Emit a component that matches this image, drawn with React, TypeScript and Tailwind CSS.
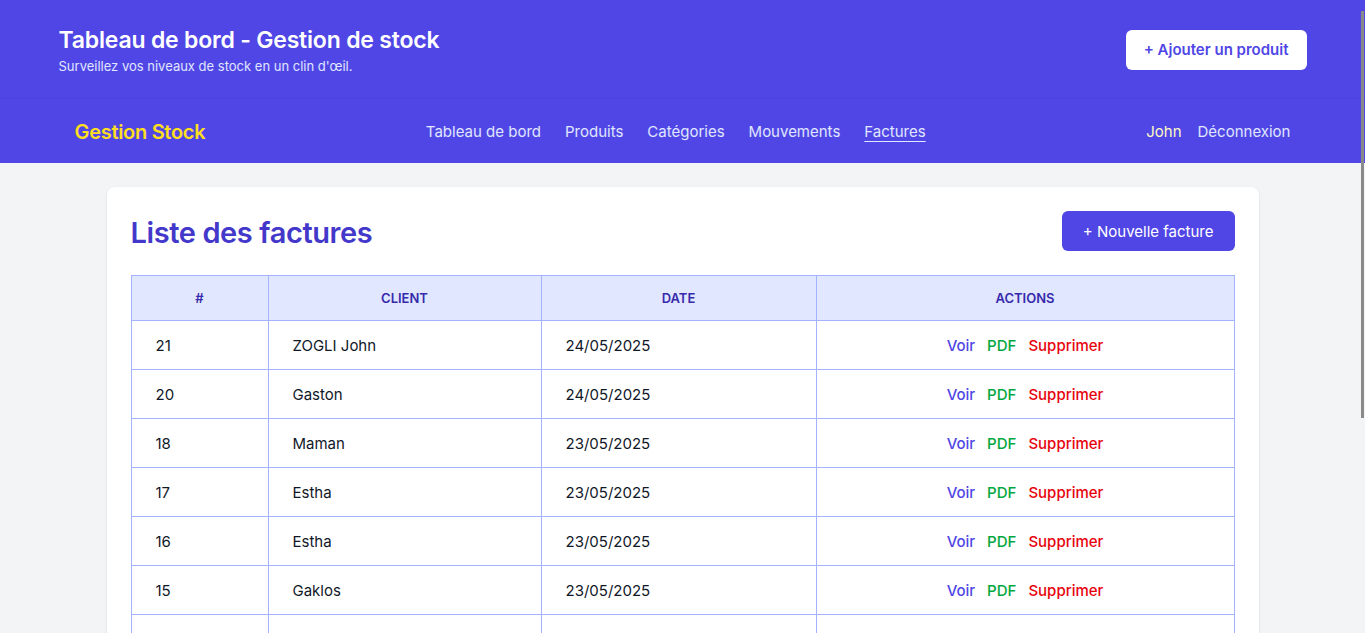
const factures = [
  { id: 21, client: "ZOGLI John", date: "24/05/2025" },
  { id: 20, client: "Gaston", date: "24/05/2025" },
  { id: 18, client: "Maman", date: "23/05/2025" },
  { id: 17, client: "Estha", date: "23/05/2025" },
  { id: 16, client: "Estha", date: "23/05/2025" },
  { id: 15, client: "Gaklos", date: "23/05/2025" },
]

const links = ["Tableau de bord", "Produits", "Catégories", "Mouvements", "Factures"]

export default function App() {
  return (
    <div className="relative h-screen overflow-hidden bg-gray-100 font-['Inter',sans-serif]">
      <header className="bg-[#4f46e5] text-white">
        <div className="border-b border-[#4c43dc]">
          <div className="mx-auto flex max-w-7xl items-center justify-between px-4 pt-6 pb-[22px]">
            <div>
              <h1 className="text-[23px] font-semibold leading-8 tracking-[-0.2px]">Tableau de bord - Gestion de stock</h1>
              <p className="text-[13px] leading-5 text-indigo-100">Surveillez vos niveaux de stock en un clin d'œil.</p>
            </div>
            <button className="rounded-md bg-white px-[18px] py-2 text-[15px] font-semibold leading-6 text-[#4f46e5]">
              + Ajouter un produit
            </button>
          </div>
        </div>
        <nav className="mx-auto flex h-16 max-w-7xl items-center justify-between px-8 pt-0.5">
          <span className="text-xl font-semibold tracking-[-0.3px] text-yellow-300">Gestion Stock</span>
          <ul className="flex gap-6 text-[15px] text-indigo-100">
            {links.map((l) => (
              <li key={l} className={l === "Factures" ? "underline underline-offset-4" : ""}>{l}</li>
            ))}
          </ul>
          <div className="flex gap-4 text-[15px]">
            <span className="text-yellow-100">John</span>
            <span className="text-indigo-100">Déconnexion</span>
          </div>
        </nav>
      </header>

      <main className="mx-auto mt-6 max-w-6xl rounded-lg bg-white p-6 shadow">
        <div className="mb-6 flex items-center justify-between">
          <h2 className="pt-1 text-[29px] font-semibold leading-9 tracking-[-0.4px] text-[#4338ca]">Liste des factures</h2>
          <button className="rounded-md bg-[#4f46e5] px-[21px] pt-[9px] pb-[7px] text-[15px] leading-6 text-white">+ Nouvelle facture</button>
        </div>
        <table className="w-full border-collapse border border-indigo-300 text-[15px]">
          <thead className="bg-indigo-100 text-[13px] font-semibold uppercase text-indigo-800">
            <tr>
              <th className="w-[137px] border border-indigo-300 px-6 py-3 font-semibold leading-5">#</th>
              <th className="w-[273px] border border-indigo-300 px-6 py-3 font-semibold leading-5">Client</th>
              <th className="w-[275px] border border-indigo-300 px-6 py-3 font-semibold leading-5">Date</th>
              <th className="border border-indigo-300 px-6 py-3 font-semibold leading-5">Actions</th>
            </tr>
          </thead>
          <tbody className="text-gray-900">
            {factures.map((f) => (
              <tr key={f.id}>
                <td className="border border-indigo-300 px-6 pt-[13px] pb-[11px] leading-6">{f.id}</td>
                <td className="border border-indigo-300 px-6 pt-[13px] pb-[11px] leading-6">{f.client}</td>
                <td className="border border-indigo-300 px-6 pt-[13px] pb-[11px] leading-6">{f.date}</td>
                <td className="border border-indigo-300 px-6 pt-[13px] pb-[11px] leading-6">
                  <div className="flex justify-center gap-3 font-medium">
                    <a className="text-[#4f46e5]">Voir</a>
                    <a className="text-green-600">PDF</a>
                    <a className="text-red-600">Supprimer</a>
                  </div>
                </td>
              </tr>
            ))}
            <tr>
              <td className="h-12 border border-indigo-300" />
              <td className="h-12 border border-indigo-300" />
              <td className="h-12 border border-indigo-300" />
              <td className="h-12 border border-indigo-300" />
            </tr>
          </tbody>
        </table>
      </main>

      <div className="fixed right-[1px] top-[11px] h-[407px] w-[3px] bg-[#8a8a8a]" />
    </div>
  )
}
